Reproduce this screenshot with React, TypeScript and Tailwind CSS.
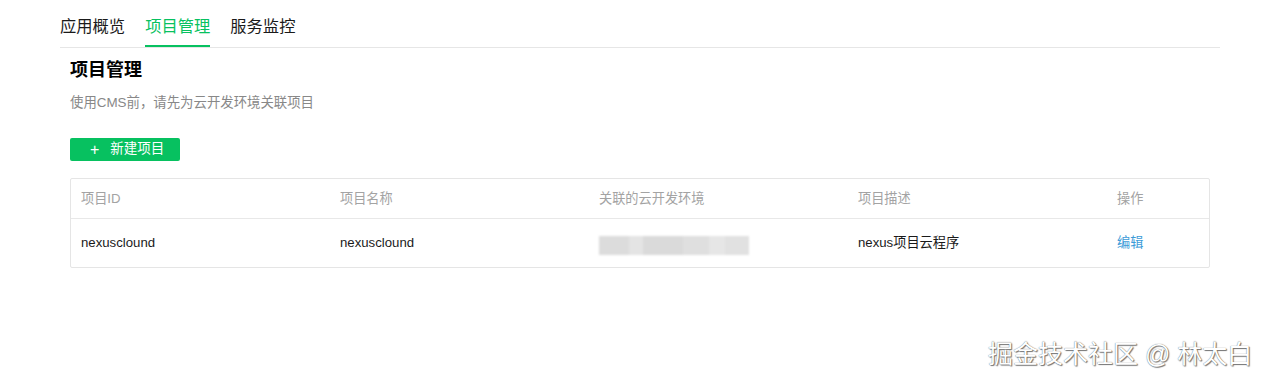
import React from 'react';

const App = () => {
  const tabs = ['应用概览', '项目管理', '服务监控'];
  const font = { fontFamily: '"Liberation Sans", "Noto Sans CJK SC", sans-serif' };

  return (
    <div className="relative w-[1263px] h-[383px] bg-white text-[#222]" style={font}>
      {/* Tabs */}
      <div className="ml-[60px] w-[1160px] h-[48px] flex gap-5 border-b border-[#e6e6e6]">
        {tabs.map((t, i) => (
          <div
            key={t}
            className={
              i === 1
                ? 'h-full flex items-center pt-[8px] text-[16.3px] text-[#07c160] border-b-2 border-[#07c160]'
                : 'h-full flex items-center pt-[8px] text-[16.3px] text-[#1a1a1a] border-b-2 border-transparent'
            }
          >
            {t}
          </div>
        ))}
      </div>

      <div className="ml-[70px] w-[1140px]">
        <h1 className="mt-[10px] text-[18px] leading-[24px] font-bold text-black">项目管理</h1>
        <p className="mt-[11px] text-[13.4px] leading-[20px] text-[#888]">使用CMS前，请先为云开发环境关联项目</p>

        <button className="mt-[25px] h-[23px] w-[110px] rounded-[2px] bg-[#07c160] text-white text-[13.5px] flex items-center pl-[20px]">
          <span className="text-[16px] leading-none mr-[11px]">+</span>
          新建项目
        </button>

        {/* Table */}
        <div className="mt-[17px] border border-[#e5e5e5] rounded-[2px]">
          <div className="grid grid-cols-[259px_259px_259px_259px_1fr] h-[40px] items-center border-b border-[#e8e8e8] text-[13.2px] text-[#a3a3a3]">
            <div className="pl-[10px]">项目ID</div>
            <div className="pl-[10px]">项目名称</div>
            <div className="pl-[10px]">关联的云开发环境</div>
            <div className="pl-[10px]">项目描述</div>
            <div className="pl-[10px]">操作</div>
          </div>
          <div className="grid grid-cols-[259px_259px_259px_259px_1fr] h-[48px] items-center text-[13.2px] text-[#1a1a1a]">
            <div className="pl-[10px]">nexusclound</div>
            <div className="pl-[10px]">nexusclound</div>
            <div className="pl-[10px]">
              <div className="flex w-[150px] h-[19px] mt-[4px] blur-[1px]">
                <div className="w-[30px] bg-[#dcdcdc]" />
                <div className="w-[14px] bg-[#e4e4e4]" />
                <div className="w-[40px] bg-[#dadada]" />
                <div className="w-[26px] bg-[#dfdfdf]" />
                <div className="w-[16px] bg-[#e6e6e6]" />
                <div className="w-[24px] bg-[#e1e1e1]" />
              </div>
            </div>
            <div className="pl-[10px]">nexus项目云程序</div>
            <div className="pl-[10px] text-[#3b9bd8]">编辑</div>
          </div>
        </div>
      </div>

      {/* Watermark */}
      <div className="absolute left-[988px] top-[337px] text-[25px] leading-[34px] text-white [text-shadow:0_0_1px_#555,1px_1px_1px_#777]">
        掘金技术社区 @ 林太白
      </div>
    </div>
  );
};

export default App;
